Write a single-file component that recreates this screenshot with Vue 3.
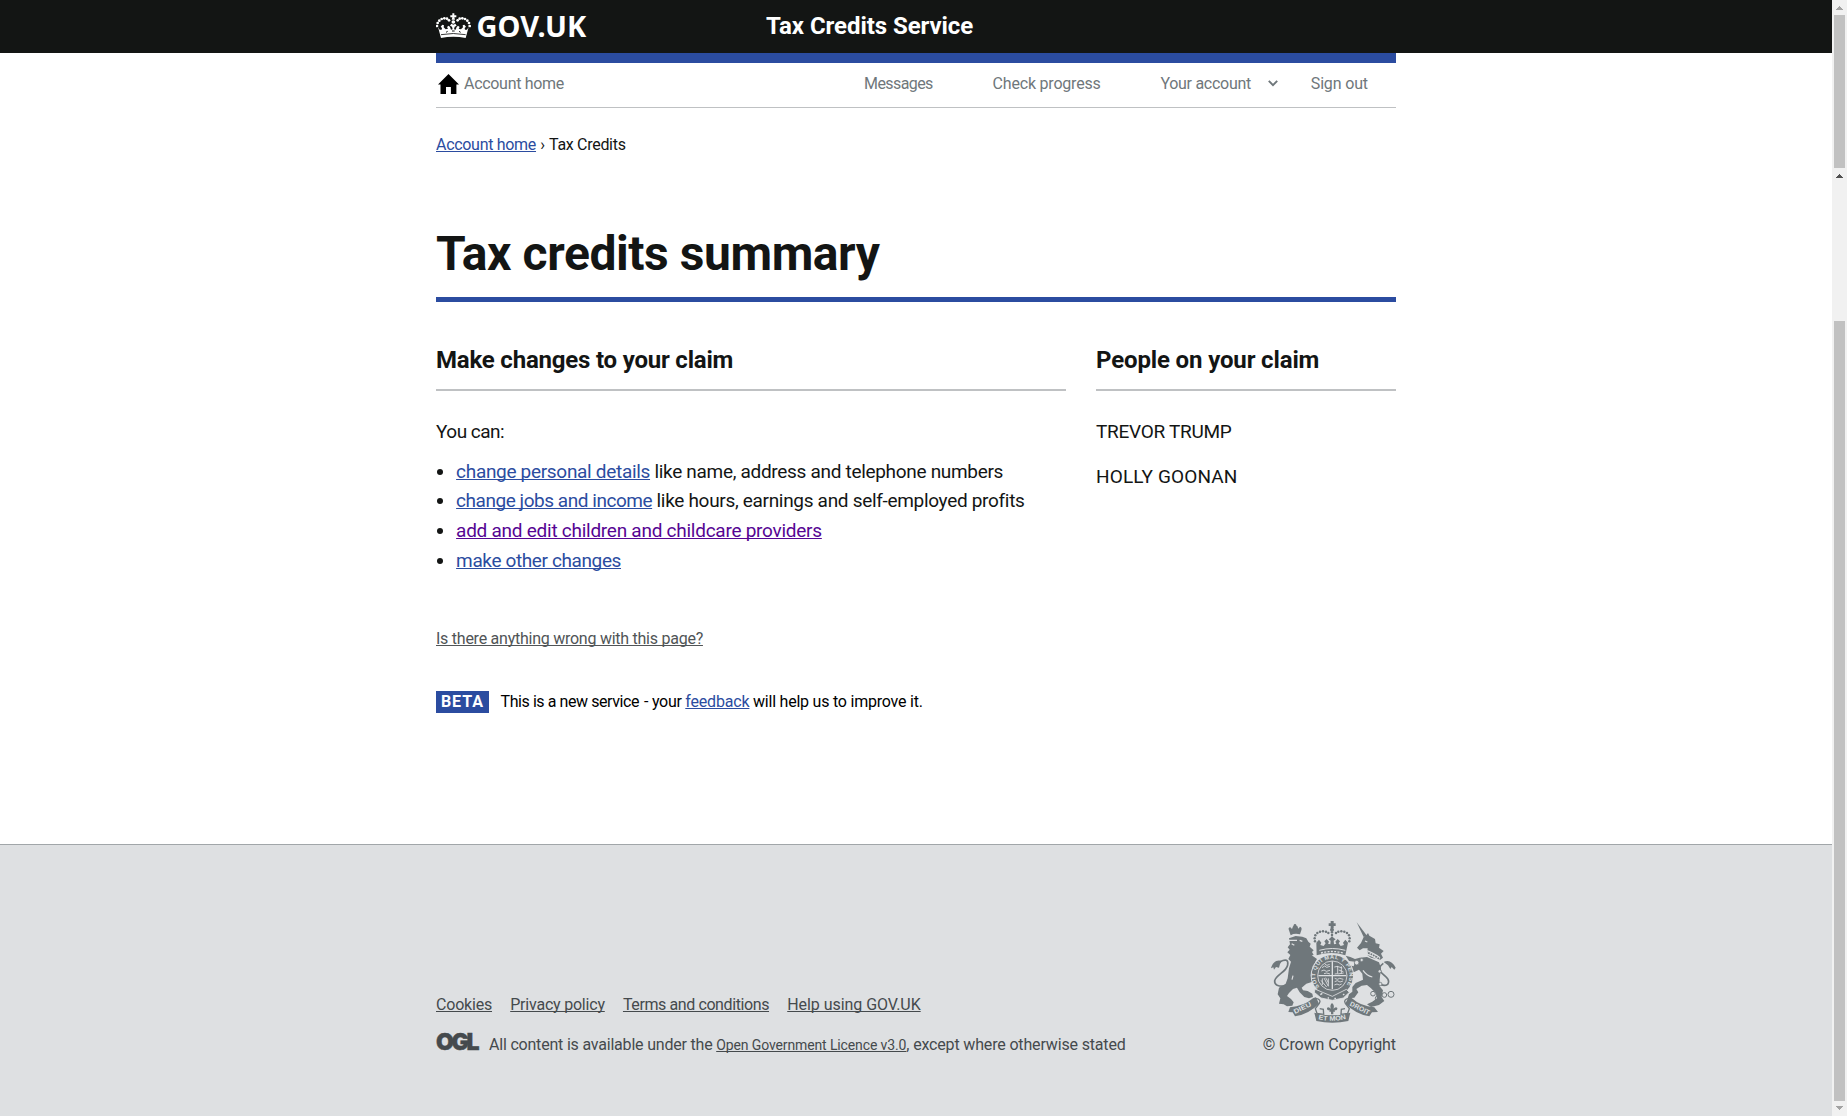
<script setup>
const navLinks = [
  { text: 'Messages', key: 'messages' },
  { text: 'Check progress', key: 'progress' },
  { text: 'Your account', key: 'account', chevron: true },
  { text: 'Sign out', key: 'signout' }
]
const changes = [
  { link: 'change personal details', rest: ' like name, address and telephone numbers', key: 'personal' },
  { link: 'change jobs and income', rest: ' like hours, earnings and self-employed profits', key: 'jobs' },
  { link: 'add and edit children and childcare providers', rest: '', key: 'children' },
  { link: 'make other changes', rest: '', key: 'other' }
]
const people = [
  { name: 'TREVOR TRUMP', key: 'claimant' },
  { name: 'HOLLY GOONAN', key: 'partner' }
]
const footerLinks = [
  { text: 'Cookies', key: 'cookies' },
  { text: 'Privacy policy', key: 'privacy' },
  { text: 'Terms and conditions', key: 'terms' },
  { text: 'Help using GOV.UK', key: 'help' }
]
const crownPearls = [
  [33, 77], [35, 68], [40, 61], [47, 56], [55, 54], [63, 55], [69, 60],
  [131, 77], [129, 68], [124, 61], [117, 56], [109, 54], [101, 55], [95, 60]
]
const armsPearls = [
  [150, 79], [149, 70], [151, 61], [157, 54], [165, 50], [174, 49], [183, 50], [190, 54],
  [253, 79], [254, 70], [252, 61], [246, 54], [238, 50], [229, 49], [220, 50], [213, 54],
  [201, 52], [201, 60], [201, 68]
]
const chain = [[324, 236, 7], [339, 250, 8], [358, 240, 7], [378, 238, 9]]
</script>

<template>
  <div class="window">
    <div class="page">
      <header class="masthead">
        <div class="wrap masthead-row">
          <a class="logo">
            <svg class="crown" viewBox="30 38 105 78" aria-hidden="true">
              <g fill="#fff">
                <circle v-for="(p, i) in crownPearls" :key="i" :cx="p[0]" :cy="p[1]" r="4.1" />
                <path d="M79 39h6v6h6v6h-6l2 7h-10l2-7h-6v-6h6z" />
                <circle cx="82" cy="65" r="5.5" />
                <path d="M36 80l5 8 6 0 1-5-4-4 5-6 5 2-1 6 6 6 7-2-3-5 5-4 4 4 3 8 5-1-2-8-6-3 4-6 6 3 6-3 4 6-6 3-2 8 5 1 3-8 4-4 5 4-3 5 7 2 6-6-1-6 5-2 5 6-4 4 1 5 6 0 5-8-9 33q-37-7-74 0z" />
              </g>
              <path d="M45 103q37-7 74 0" fill="none" stroke="#131514" stroke-width="2.5" />
              <path d="M60 96l5-3M99 93l5 3M78 92h8" stroke="#131514" stroke-width="3" />
            </svg>
            <span class="wordmark">GOV.UK</span>
          </a>
          <span class="service">Tax Credits Service</span>
        </div>
      </header>

      <div class="wrap">
        <div class="blue-bar"></div>
        <nav class="nav">
          <a class="nav-home">
            <svg class="home" viewBox="0 0 21 20" aria-hidden="true">
              <path d="M10.5 0L21 10.6H18.4V20H12.9V13H8V20H2.5V10.6H0Z" fill="#000" />
            </svg>
            <span>Account home</span>
          </a>
          <span v-for="n in navLinks" :key="n.key" class="nav-item" :class="n.key">
            {{ n.text }}
            <svg v-if="n.chevron" class="chevron" viewBox="0 0 10 7" aria-hidden="true">
              <path d="M.8 .8L5 5.2 9.2 .8" fill="none" stroke="#6f777b" stroke-width="1.9" />
            </svg>
          </span>
        </nav>

        <div class="breadcrumb">
          <a class="link">Account home</a><span class="sep">›</span><span>Tax Credits</span>
        </div>

        <h1>Tax credits summary</h1>

        <div class="columns">
          <section class="main">
            <h2>Make changes to your claim</h2>
            <p class="you-can">You can:</p>
            <ul>
              <li v-for="c in changes" :key="c.key" :class="c.key">
                <span><a class="link">{{ c.link }}</a><span v-if="c.rest" class="rest">{{ c.rest }}</span></span>
              </li>
            </ul>
          </section>
          <section class="side">
            <h2>People on your claim</h2>
            <p v-for="p in people" :key="p.key" :class="p.key">{{ p.name }}</p>
          </section>
        </div>

        <div class="report"><a>Is there anything wrong with this page?</a></div>

        <div class="phase">
          <strong>BETA</strong>
          <span class="intro">This is a new service</span>
          <span class="your">- your</span>
          <a class="link feedback">feedback</a>
          <span class="improve">will help us to improve it.</span>
        </div>
      </div>

      <footer>
        <div class="wrap footer-row">
          <div class="meta">
            <div class="footer-links">
              <a v-for="f in footerLinks" :key="f.key" :class="f.key">{{ f.text }}</a>
            </div>
            <div class="licence">
              <span class="ogl">OGL</span>
              <span class="lead">All content is available under the </span><a>Open Government Licence v3.0</a><span class="tail">, except where otherwise stated</span>
            </div>
          </div>
          <div class="copyright">
            <svg class="arms" viewBox="18 18 375 306" aria-hidden="true">
              <defs>
                <path id="garter" d="M164 216A51 51 0 1 1 240 216" />
                <path id="motto" d="M160 313Q201 322 244 312" />
              </defs>
              <g fill="#6f777b">
                <path d="M72 46Q68 38 76 37L81 42 84 34Q90 30 97 33L100 41 105 35Q112 37 109 46L105 58Q88 54 77 61z" />
                <circle cx="90" cy="31" r="4" />
                <path d="M72 70L92 63 112 65 124 70 130 80 137 86 134 95 146 106 141 111 146 120 140 121 156 132 150 142 158 150 150 157 143 152 146 176 152 186 148 198 138 202 124 206 110 218 114 226 128 228 142 236 144 246 132 250 118 246 104 232 96 218 84 222 72 234 66 243 78 252 86 262 82 272 66 274 56 268 42 266 46 250 38 238 42 218 62 206 68 190 72 160 78 140 70 132 76 120 67 112 74 104 68 97 75 88z" />
                <path d="M51 138C35 132 22 142 18 160L25 157 27 164 33 156 42 158 45 147z" />
                <path d="M275 22L306 62 296 66z" />
                <path d="M296 66L304 61 309 54 313 62 330 72 332 85 344 88 342 98 356 108 348 116 354 128 344 136 336 132 318 128 306 119 308 100 294 100 284 106 276 98 288 84z" />
                <path d="M306 126L342 142 348 160 346 176 344 194 344 214 354 226 350 246 358 258 342 270 318 276 306 268 322 260 336 250 332 234 318 220 306 210 290 212 274 222 280 232 268 248 248 250 252 238 262 230 262 216 272 204 294 194 292 176 282 164 266 172 254 162 250 150 266 154 270 140 252 138 242 122 256 126 270 132 284 128z" />
                <path d="M356 141Q377 130 392 158L388 164 380 156 376 162 369 151z" />
              </g>
              <g fill="none" stroke="#6f777b" stroke-width="5">
                <path d="M45 140Q72 127 68 150C64 171 35 178 29 197Q27 216 62 213" />
                <path d="M355 145Q336 158 349 173C366 188 376 195 368 208Q356 216 340 204" />
              </g>
              <g fill="none" stroke="#dee0e2" stroke-width="3.5">
                <path d="M72 76h24M80 86l8 5M104 76l8 3M84 182l-3 12" />
                <path d="M296 115Q319 119 343 137M301 106Q322 111 345 128" />
                <path d="M300 78l7 3M294 166Q305 182 322 186" />
              </g>
              <path d="M299 111Q321 116 344 133" fill="none" stroke="#dee0e2" stroke-width="6" stroke-dasharray="3 5" />
              <g fill="none" stroke="#6f777b" stroke-width="3">
                <circle v-for="(c, i) in chain" :key="i" :cx="c[0]" :cy="c[1]" :r="c[2]" />
              </g>
              <g fill="#dee0e2" stroke="#6f777b" stroke-width="2.5">
                <circle cx="275" cy="143" r="7" /><circle cx="290" cy="135" r="5" /><circle cx="344" cy="169" r="5" /><circle cx="346" cy="207" r="5" />
              </g>

              <circle v-for="(p, i) in armsPearls" :key="'p' + i" :cx="p[0]" :cy="p[1]" r="3.7" fill="#6f777b" />
              <g fill="#6f777b">
                <path d="M197 18h9v7h6v8h-6v6h-9v-6h-6v-8h6z" />
                <circle cx="201" cy="44" r="6" />
                <path d="M154 83l8-9 7 9-3 7 10 3 6-8-4-6 7-7 7 8-3 6 7 2 1-11-6-4 10-8 11 8-6 4 1 11 7-2-3-6 7-8 7 7-4 6 6 8 10-3-3-7 7-9 8 9-8 38q-41-14-86 0z" />
              </g>
              <path d="M163 106q39-11 78 0" fill="none" stroke="#dee0e2" stroke-width="3" />
              <path d="M168 114q33-9 68 0" fill="none" stroke="#dee0e2" stroke-width="4" stroke-dasharray="6 4" />

              <circle cx="202" cy="182" r="65" fill="#dee0e2" />
              <circle cx="202" cy="182" r="62" fill="#6f777b" />
              <text class="garter-text"><textPath href="#garter" textLength="226" lengthAdjust="spacing">SOIT QUI MAL Y PENSE</textPath></text>
              <circle cx="202" cy="182" r="44" fill="#6f777b" stroke="#dee0e2" stroke-width="2.5" />
              <path d="M202 139v84M160 182h84" stroke="#dee0e2" stroke-width="4" />
              <g fill="none" stroke="#dee0e2" stroke-width="2.6">
                <path d="M171 158l8-5 6 4 10-3M169 168l8-3 7 4 11-3M177 176l8-2 10 3M180 148l6 3 8-3" />
                <path d="M208 156l10-2v22l-9 1M216 154l16 5M221 165l14 5M218 177l18-3M229 154v22" />
                <path d="M172 190v20M177 189l13 25M182 188l8 15M168 196l17 20M190 190v23" />
                <path d="M209 190l8 3 7-3 11 3M209 200l8-3 8 4 9-3M208 210l8-3 7 3 7-3" />
              </g>
              <path d="M150 222l18 8 34 14 42-21 9 9-18 17-33 7-34-7-20-17z" fill="#6f777b" stroke="#dee0e2" stroke-width="2.5" />
              <path d="M166 239l6-4M188 249l4 0M208 250l5 0M234 240l4-3" stroke="#dee0e2" stroke-width="4" />

              <path d="M201 264Q193 272 198 281Q190 273 186 279Q185 287 194 286L193 290H198V298H205V290H210L209 286Q218 287 217 279Q213 273 205 281Q210 272 201 264z" fill="#6f777b" />
              <g fill="#6f777b">
                <path d="M75 277Q116 274 145 249L153 247 162 266Q132 297 90 304L83 292 70 291z" />
                <path d="M328 277Q287 274 260 249L250 247 241 266Q272 297 313 304L321 292 339 291z" />
                <path d="M148 293Q202 309 256 293L250 318Q202 328 154 318z" />
              </g>
              <path d="M152 250Q170 253 163 265L151 281 156 295 176 298 175 283 164 281M252 250Q234 253 241 265L253 281 248 295 228 298 229 283 240 281" fill="none" stroke="#6f777b" stroke-width="4" />
              <text class="scroll-text" transform="translate(90 297) rotate(-26)" textLength="56" lengthAdjust="spacingAndGlyphs">DIEU</text>
              <text class="scroll-text" transform="translate(253 271) rotate(27)" textLength="64" lengthAdjust="spacingAndGlyphs">DROIT</text>
              <text class="scroll-text"><textPath href="#motto" textLength="84" lengthAdjust="spacingAndGlyphs">ET MON</textPath></text>
            </svg>
            <a class="crown-text">© Crown Copyright</a>
          </div>
        </div>
      </footer>
    </div>

    <aside class="scrollbar" aria-hidden="true">
      <svg class="up" viewBox="0 0 7 4"><path d="M3 0h1v1h1v1h1v1h1v1H0V3h1V2h1V1h1z" fill="#a3a3a3" /></svg>
      <div class="thumb thumb-short"></div>
      <svg class="mid" viewBox="0 0 7 4"><path d="M3 0h1v1h1v1h1v1h1v1H0V3h1V2h1V1h1z" fill="#505050" /></svg>
      <div class="thumb thumb-long"></div>
      <svg class="down" viewBox="0 0 7 4"><path d="M0 0h7v1H6v1H5v1H4v1H3V3H2V2H1V1H0z" fill="#a3a3a3" /></svg>
    </aside>
  </div>
</template>

<style>
body { margin: 0; background: #fff; overflow: hidden; }
</style>

<style scoped>
.window { display: flex; height: 1116px; font: 16px/20px Roboto, 'Liberation Sans', sans-serif; color: #131514; overflow: hidden; }
.page { flex: 1; display: flex; flex-direction: column; }
.wrap { width: 960px; margin: 0 auto; }
h1, h2, p, ul { margin: 0; padding: 0; }
a { text-decoration-thickness: 1px; text-underline-offset: 1px; text-decoration-skip-ink: none; }
.link { color: #2b4ca0; text-decoration-line: underline; }

.masthead { background: #131514; height: 53px; }
.masthead-row { display: flex; align-items: flex-start; color: #fff; }
.logo { display: flex; width: 330px; }
.crown { width: 35px; height: 26px; margin-top: 12.7px; }
.wordmark { margin: 6px 0 0 5.5px; font: bold 29px/40px 'Noto Sans', sans-serif; }
.service { margin-top: 11px; font-size: 24px; line-height: 30px; font-weight: 700; letter-spacing: -0.06px; }

.blue-bar { height: 10px; background: #2b4ca0; }
.nav { display: flex; height: 44px; border-bottom: 1px solid #bfc1c3; color: #6f777b; line-height: 20px; }
.nav > * { margin-top: 11px; height: 20px; white-space: nowrap; }
.nav-home { display: flex; width: 428px; letter-spacing: -0.3px; }
.home { width: 21px; height: 20px; margin: 0 5.5px 0 1.5px; }
.nav-item { display: flex; align-items: flex-start; }
.messages { width: 128.6px; letter-spacing: -0.58px; }
.progress { width: 167.8px; letter-spacing: -0.2px; }
.account { width: 150.4px; letter-spacing: -0.28px; }
.signout { letter-spacing: -0.15px; }
.chevron { width: 10px; height: 7px; margin: 6px 0 0 17px; }

.breadcrumb { display: flex; margin-top: 27px; letter-spacing: -0.3px; }
.sep { width: 13px; text-align: center; }

h1 { margin-top: 70px; padding-bottom: 15px; border-bottom: 5px solid #2b4ca0; font-size: 48px; line-height: 57px; letter-spacing: -0.42px; }
.columns { display: flex; gap: 30px; margin-top: 43px; font-size: 19px; line-height: 25px; }
.main { width: 630px; }
.side { width: 300px; }
h2 { font-size: 24px; line-height: 30px; padding-bottom: 14px; border-bottom: 2px solid #bfc1c3; letter-spacing: -0.2px; margin-bottom: 28px; }
.side h2 { letter-spacing: -0.14px; }
.you-can { letter-spacing: -0.5px; }
ul { list-style: none; margin-top: 15px; }
li { display: flex; margin-bottom: 5px; white-space: pre; }
li::before { content: ''; width: 6px; height: 6px; border-radius: 50%; background: #131514; margin: 10px 13.1px 0 1px; }
li.personal { margin-bottom: 4px; }
.personal .link { letter-spacing: -0.31px; }
.jobs .link { letter-spacing: -0.46px; }
.children .link { letter-spacing: -0.26px; color: #560593; }
.other .link { letter-spacing: -0.38px; }
.rest { letter-spacing: -0.31px; }
.claimant { letter-spacing: -0.28px; margin-bottom: 20px; }
.partner { letter-spacing: 0.15px; }

.report { margin-top: 51px; letter-spacing: -0.25px; color: #505456; }
.report a { text-decoration-line: underline; }
.phase { display: flex; margin-top: 42px; color: #000; white-space: nowrap; }
.phase strong { width: 53px; height: 22px; line-height: 21px; text-align: center; letter-spacing: 1px; background: #2b4ca0; color: #fff; }
.phase > :not(strong) { margin-top: 1px; }
.intro { margin-left: 11.5px; width: 143.5px; letter-spacing: -0.42px; }
.your { width: 41.3px; letter-spacing: -0.25px; }
.feedback { letter-spacing: -0.18px; }
.improve { margin-left: 3.6px; letter-spacing: -0.22px; }

footer { margin-top: auto; height: 271px; border-top: 1px solid #a1a6a9; background: #dee0e2; color: #454a4d; }
.footer-row { display: flex; justify-content: space-between; white-space: nowrap; }
.meta { padding-top: 150px; }
.footer-links { display: flex; gap: 18.2px; }
.footer-links a, .licence a { text-decoration-line: underline; }
.cookies { letter-spacing: -0.2px; }
.privacy { letter-spacing: -0.21px; }
.terms { letter-spacing: -0.4px; }
.help { letter-spacing: -0.05px; }
.licence { display: flex; align-items: baseline; margin-top: 17px; height: 20px; white-space: pre; }
.ogl { width: 53px; font: 900 23px/20px Inter, sans-serif; letter-spacing: -2.4px; -webkit-text-stroke: 0.4px #454a4d; }
.lead { letter-spacing: -0.2px; }
.licence a { font-size: 14px; letter-spacing: -0.12px; }
.tail { letter-spacing: -0.16px; }
.copyright { display: flex; flex-direction: column; align-items: flex-end; padding-top: 75.5px; }
.arms { width: 125px; height: 102px; }
.crown-text { margin-top: 12.5px; letter-spacing: -0.07px; }
.garter-text { font: bold 17px 'Liberation Sans', sans-serif; fill: #dee0e2; }
.scroll-text { font: bold 20px 'Liberation Sans', sans-serif; fill: #dee0e2; }

.scrollbar { width: 15px; background: #f1f1f1; display: flex; flex-direction: column; align-items: center; }
.scrollbar svg { width: 7px; height: 4px; flex: none; }
.up { margin: 6px 0 5px; }
.thumb { width: 11px; background: #c1c1c1; flex: none; }
.thumb-short { height: 153px; }
.mid { margin: 6px 0 143px; }
.thumb-long { height: 780px; }
.down { margin-top: 5px; }
</style>
